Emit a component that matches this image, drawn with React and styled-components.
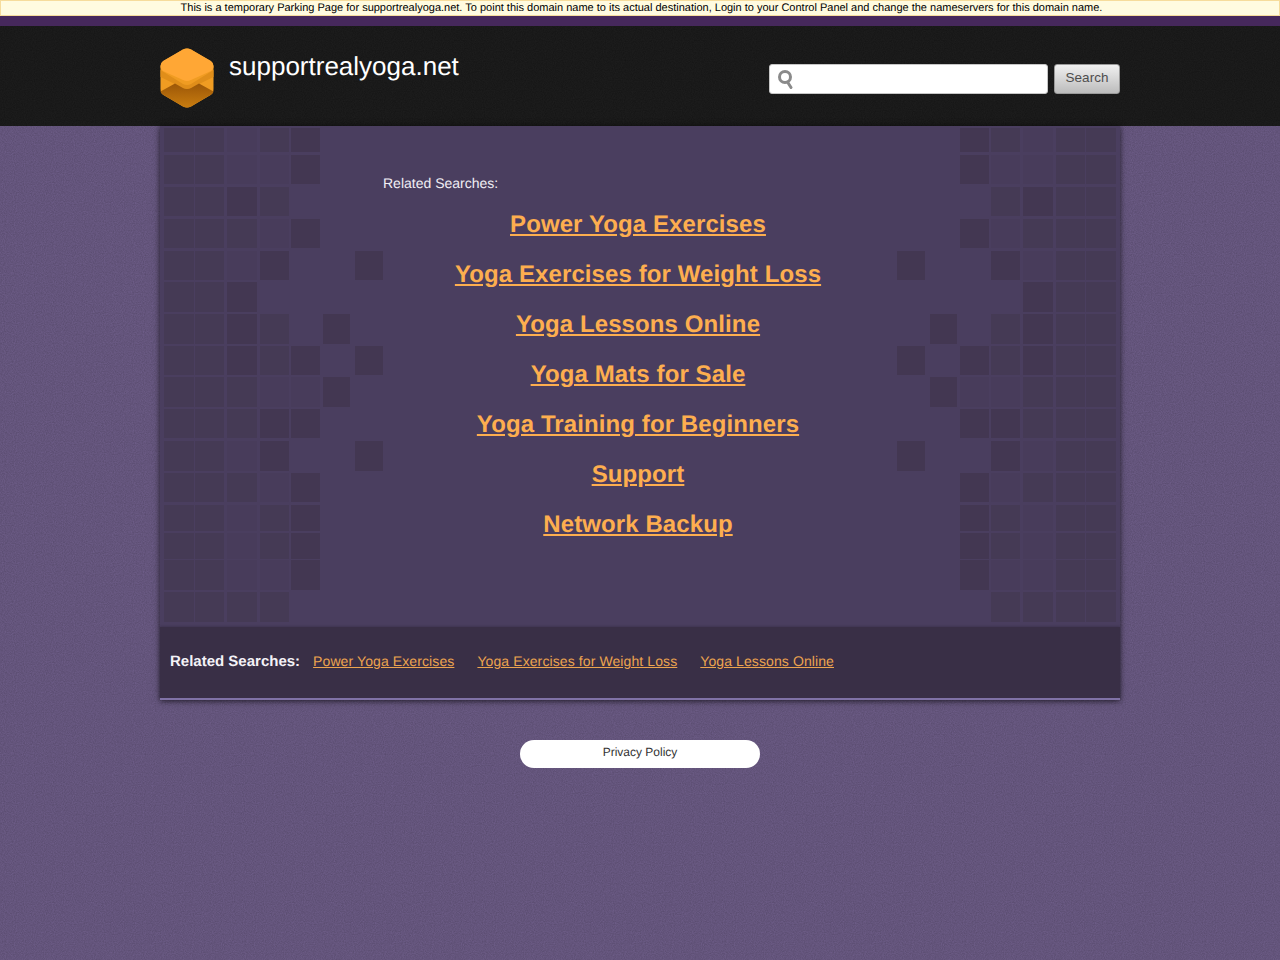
import React from "react";
import styled, { createGlobalStyle } from "styled-components";

const noise = (base, amount) =>
  `url("data:image/svg+xml,%3Csvg xmlns='http://www.w3.org/2000/svg' width='240' height='240'%3E%3Cfilter id='n'%3E%3CfeTurbulence type='fractalNoise' baseFrequency='.9' numOctaves='2' stitchTiles='stitch'/%3E%3CfeColorMatrix values='0 0 0 0 ${base} 0 0 0 0 ${base} 0 0 0 0 ${base} 0 0 0 ${amount} 0'/%3E%3C/filter%3E%3Crect width='240' height='240' filter='url(%23n)'/%3E%3C/svg%3E")`;

const GlobalStyle = createGlobalStyle`
  html, body {
    margin: 0;
    padding: 0;
  }
  body {
    min-height: 960px;
    background-color: #705f8b;
    background-image: ${noise(0, 0.22)};
    font-family: "Liberation Sans", Arial, sans-serif;
    text-rendering: geometricPrecision;
  }
`;

const Notice = styled.div`
  box-sizing: border-box;
  height: 16px;
  padding: 1px 0 0 3px;
  background: #fffbe0;
  border: 1px solid #f6dc9c;
  color: #000;
  font-size: 11px;
  line-height: 13px;
  text-align: center;
`;

const Band = styled.div`
  height: 10px;
  background: #46285c;
`;

const Header = styled.header`
  height: 100px;
  background-color: #1f1f1f;
  background-image: ${noise(0, 0.35)};
`;

const HeaderInner = styled.div`
  width: 960px;
  height: 100%;
  margin: 0 auto;
  display: flex;
  justify-content: space-between;
`;

const Brand = styled.div`
  display: flex;
  gap: 15px;
  padding-top: 22px;
`;

const BrandName = styled.div`
  color: #fff;
  font-size: 26px;
  line-height: 36px;
`;

const SearchForm = styled.form`
  display: flex;
  gap: 6px;
  margin: 38px 0 0;
`;

const SearchBox = styled.div`
  box-sizing: border-box;
  width: 279px;
  height: 30px;
  display: flex;
  align-items: center;
  gap: 3px;
  padding: 0 7px;
  background: #fff;
  border: 1px solid #c6c6c6;
  border-radius: 3px;
`;

const SearchInput = styled.input`
  flex: 1;
  min-width: 0;
  border: 0;
  outline: 0;
  background: none;
`;

const SearchButton = styled.button`
  box-sizing: border-box;
  width: 66px;
  height: 30px;
  padding: 0 0 4px;
  background: linear-gradient(#f0f0f0, #bcbcbc);
  border: 1px solid #9a9a9a;
  border-radius: 3px;
  color: #4d4d4d;
  font-family: inherit;
  font-size: 13.5px;
`;

const Panel = styled.main`
  width: 960px;
  margin: 0 auto;
  box-shadow: 0 1px 6px rgba(0, 0, 0, 0.7);
`;

const Results = styled.section`
  height: 501px;
  display: grid;
  grid-template-columns: 223px 1fr 223px;
  background: #4a3e5f;
`;

const Pattern = styled.svg`
  display: block;
  width: 223px;
  height: 500px;
  transform: ${(p) => (p.$flip ? "scaleX(-1)" : "none")};
`;

const Center = styled.div`
  padding: 48px 4px 0 0;
`;

const Heading = styled.div`
  color: #f1eef5;
  font-size: 14px;
  line-height: 18px;
  margin-bottom: 8px;
`;

const BigLinks = styled.div`
  display: flex;
  flex-direction: column;
  align-items: center;
`;

const BigLink = styled.a`
  color: #fdae4f;
  font-size: 24px;
  font-weight: bold;
  letter-spacing: 0.1px;
  line-height: 50px;
  text-decoration: underline;
`;

const Strip = styled.section`
  box-sizing: border-box;
  height: 73px;
  display: flex;
  align-items: baseline;
  padding: 23px 10px 0;
  background: #392f46;
  border-bottom: 2px solid #8072a6;
  box-shadow: 0 -1px 2px rgba(0, 0, 0, 0.15);
  font-size: 14px;
  line-height: 22px;
`;

const StripLabel = styled.strong`
  color: #f4f2f7;
  font-size: 15px;
  margin-right: 13px;
`;

const StripLink = styled.a`
  color: #eca44f;
  letter-spacing: 0.1px;
  text-decoration: underline;
  margin-right: 23px;
`;

const PrivacyPill = styled.a`
  display: block;
  box-sizing: border-box;
  width: 240px;
  height: 28px;
  margin: 40px auto 0;
  padding-top: 4px;
  background: #fff;
  border-radius: 14px;
  color: #333;
  font-size: 12px;
  line-height: 16px;
  text-align: center;
`;

const COL_X = [4, 35, 67, 100, 131, 163, 195];
const COL_W = [30, 29, 30, 29, 29, 27, 28];
const ROW_Y = [2, 29, 61, 93, 125, 156, 188, 220, 251, 283, 315, 347, 379, 407, 434, 466];
const ROW_H = [24, 29, 29, 29, 29, 30, 30, 29, 30, 29, 30, 29, 26, 26, 30, 30];

// 0 empty, 1 faint, 2 normal, 3 dark
const CELLS = [
  "2212300",
  "2211300",
  "2232000",
  "2221300",
  "2213003",
  "2230000",
  "2232030",
  "2232303",
  "2221130",
  "2223300",
  "2213003",
  "2221300",
  "2212300",
  "2212300",
  "2211300",
  "2222000",
];

const FILL = {
  1: "#483c5b",
  2: "#453a55",
  3: "#433752",
};

const SidePattern = ({ flip }) => (
  <Pattern $flip={flip} viewBox="0 0 223 500">
    {CELLS.flatMap((row, r) =>
      row.split("").map((c, i) =>
        c === "0" ? null : (
          <rect key={`${r}-${i}`} x={COL_X[i]} y={ROW_Y[r]} width={COL_W[i]} height={ROW_H[r]} fill={FILL[c]} />
        )
      )
    )}
  </Pattern>
);

const Logo = () => (
  <svg width="54" height="60" viewBox="0 0 54 60">
    <defs>
      <linearGradient id="logoDark" x1="0" y1="0" x2="0" y2="1">
        <stop offset="0" stopColor="#9c5707" />
        <stop offset="1" stopColor="#c87c10" />
      </linearGradient>
    </defs>
    <path d="M23 1.500 Q27 -.5 31 1.500 L50.500 13 Q53.500 15 53.500 19 L53.500 41 Q53.500 45 50.500 47 L31 58.500 Q27 60.500 23 58.500 L3.500 47 Q.5 45 .5 41 L.5 19 Q.5 15 3.500 13 Z" fill="#f09c22" />
    <path d="M.5 22 L23 36 Q27 38 31 36 L53.500 22 L53.500 29 L31 40 Q27 42 23 40 L.5 29 Z" fill="#e08e1a" />
    <path d="M27 41 Q29 41 31 40 L39 35.500 L53.500 43.500 Q53 45.500 50.500 47 L31 58.500 Q27 60.500 23 58.500 L3.500 47 Q1 45.500 .5 43.500 L15 35.500 L23 40 Q25 41 27 41 Z" fill="url(#logoDark)" />
    <path d="M23 1.500 Q27 -.5 31 1.500 L51 13 Q53.500 15 53.500 18 L53.500 19 Q53.500 21 51 23 L31 32 Q27 34 23 32 L3 23 Q.5 21 .5 19 L.5 18 Q.5 15 3 13 Z" fill="#ffa735" />
  </svg>
);

const SearchIcon = () => (
  <svg width="18" height="20" viewBox="0 0 18 20">
    <circle cx="8" cy="8" r="5.500" fill="none" stroke="#8a8a8a" strokeWidth="3" />
    <path d="M10.500 13 L14 18.500" stroke="#8a8a8a" strokeWidth="3" strokeLinecap="round" />
  </svg>
);

const bigLinks = [
  "Power Yoga Exercises",
  "Yoga Exercises for Weight Loss",
  "Yoga Lessons Online",
  "Yoga Mats for Sale",
  "Yoga Training for Beginners",
  "Support",
  "Network Backup",
];

const stripLinks = ["Power Yoga Exercises", "Yoga Exercises for Weight Loss", "Yoga Lessons Online"];

export default function App() {
  return (
    <>
      <GlobalStyle />
      <Notice>
        This is a temporary Parking Page for supportrealyoga.net. To point this domain name to its actual destination,
        Login to your Control Panel and change the nameservers for this domain name.
      </Notice>
      <Band />
      <Header>
        <HeaderInner>
          <Brand>
            <Logo />
            <BrandName>supportrealyoga.net</BrandName>
          </Brand>
          <SearchForm onSubmit={(e) => e.preventDefault()}>
            <SearchBox>
              <SearchIcon />
              <SearchInput type="text" />
            </SearchBox>
            <SearchButton type="submit">Search</SearchButton>
          </SearchForm>
        </HeaderInner>
      </Header>
      <Panel>
        <Results>
          <SidePattern />
          <Center>
            <Heading>Related Searches:</Heading>
            <BigLinks>
              {bigLinks.map((t) => (
                <BigLink key={t} href="#">
                  {t}
                </BigLink>
              ))}
            </BigLinks>
          </Center>
          <SidePattern flip />
        </Results>
        <Strip>
          <StripLabel>Related Searches:</StripLabel>
          {stripLinks.map((t) => (
            <StripLink key={t} href="#">
              {t}
            </StripLink>
          ))}
        </Strip>
      </Panel>
      <PrivacyPill>Privacy Policy</PrivacyPill>
    </>
  );
}
